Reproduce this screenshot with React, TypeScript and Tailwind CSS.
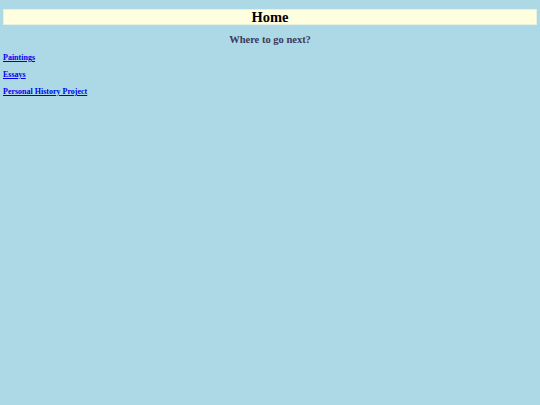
export default function App() {
  const links = ['Paintings', 'Essays', 'Personal History Project']
  return (
    <div className="min-h-[405px] bg-[#add8e6] px-[3px] pt-[9px] font-['Liberation_Serif',serif]">
      <h1 className="border border-[#e8f0e0] bg-[#ffffe0] text-center text-[14.5px] font-bold leading-[14px] text-black">
        Home
      </h1>
      <h2 className="mt-[8px] text-center text-[10.5px] font-bold leading-[13px] text-[#3a3a5a]">Where to go next?</h2>
      <ul className="mt-[7px] flex flex-col gap-[7px]">
        {links.map((l) => (
          <li key={l} className="text-[8px] font-bold leading-[10px]">
            <a href="#" className="text-[#0000ee] underline">
              {l}
            </a>
          </li>
        ))}
      </ul>
    </div>
  )
}
